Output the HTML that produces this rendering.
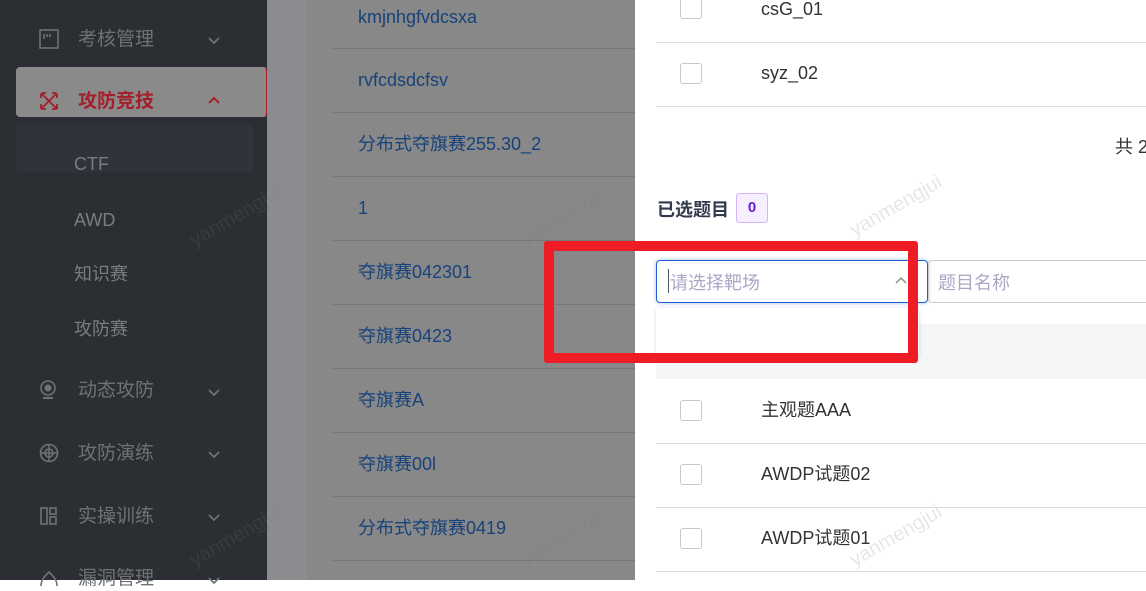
<!DOCTYPE html>
<html><head><meta charset="utf-8"><style>
*{margin:0;padding:0;box-sizing:border-box}
body{width:1146px;height:580px;overflow:hidden;position:relative;font-family:"Liberation Sans","Noto Sans CJK SC",sans-serif;background:#fff}
.abs{position:absolute}
#side{left:0;top:0;width:267px;height:580px;background:#2b2e33}
.mi{position:absolute;left:78px;font-size:19px;color:#6f7175;line-height:24px}
.ic{position:absolute;left:39px;width:20px;height:20px}
.chev{position:absolute;left:206px;width:16px;height:14px}
.sub{position:absolute;left:74px;font-size:18px;color:#7a7c80;line-height:24px}
#strip{left:267px;top:0;width:40px;height:580px;background:#8b8c90}
#mid{left:307px;top:0;width:328px;height:580px;background:#888}
.ml{position:absolute;left:26px;right:0;height:1px;background:#777}
.mt{position:absolute;left:51px;font-size:18px;color:#17427a;line-height:24px;white-space:nowrap}
#dr{left:635px;top:0;width:511px;height:580px;background:#fff}
.cb{position:absolute;left:45px;width:22px;height:21px;border:1px solid #c8c8c8;border-radius:3px;background:#fff}
.rt{position:absolute;left:126px;font-size:18px;color:#333;line-height:24px;white-space:nowrap}
.rl{position:absolute;left:21px;right:0;height:1px;background:#dcdcdc}
.wm{position:absolute;font-size:20px;color:rgba(120,120,120,.18);transform:rotate(-30deg);white-space:nowrap}
</style></head><body>
<div id="side" class="abs">
 <svg class="ic" style="top:29px" viewBox="0 0 20 20"><rect x="1" y="1" width="18" height="18" fill="none" stroke="#6f7175" stroke-width="1.6"/><path d="M5 5v5M8 5v3M11 5v3" stroke="#6f7175" stroke-width="1.6"/></svg>
 <div class="mi" style="top:28px">考核管理</div>
 <svg class="chev" style="top:33px" viewBox="0 0 16 14"><path d="M3 5l5 5 5-5" fill="none" stroke="#6f7175" stroke-width="1.8"/></svg>
 <div class="abs" style="left:16px;top:67px;width:252px;height:50px;background:#8a8a8a;border-radius:4px;border-right:2px solid #a3202a"></div>
 <svg class="ic" style="top:91px" viewBox="0 0 20 20"><path d="M2 2l16 16M18 2L2 18M3 2l4 0M2 3v4M13 18h5M18 13v5M17 2h-4M18 3v4M2 13v5M3 18h4" stroke="#a3202a" stroke-width="1.8" fill="none"/></svg>
 <div class="mi" style="top:90px;color:#a3202a;font-weight:bold">攻防竞技</div>
 <svg class="chev" style="top:94px" viewBox="0 0 16 14"><path d="M3 9l5-5 5 5" fill="none" stroke="#a3202a" stroke-width="2"/></svg>
 <div class="abs" style="left:16px;top:125px;width:237px;height:47px;background:#30333a;border-radius:3px"></div>
 <div class="sub" style="top:152px">CTF</div>
 <div class="sub" style="top:208px">AWD</div>
 <div class="sub" style="top:262px">知识赛</div>
 <div class="sub" style="top:317px">攻防赛</div>
 <svg class="ic" style="top:380px" viewBox="0 0 20 20"><circle cx="9" cy="8" r="7" fill="none" stroke="#6f7175" stroke-width="1.6"/><circle cx="9" cy="8" r="3.5" fill="#6f7175"/><path d="M4 18h10" stroke="#6f7175" stroke-width="2"/></svg>
 <div class="mi" style="top:379px">动态攻防</div>
 <svg class="chev" style="top:385px" viewBox="0 0 16 14"><path d="M3 5l5 5 5-5" fill="none" stroke="#6f7175" stroke-width="1.8"/></svg>
 <svg class="ic" style="top:443px" viewBox="0 0 20 20"><circle cx="10" cy="10" r="8.5" fill="none" stroke="#6f7175" stroke-width="1.6"/><circle cx="10" cy="10" r="4" fill="none" stroke="#6f7175" stroke-width="1.6"/><path d="M10 1v18M1 10h18" stroke="#6f7175" stroke-width="1.4"/></svg>
 <div class="mi" style="top:442px">攻防演练</div>
 <svg class="chev" style="top:447px" viewBox="0 0 16 14"><path d="M3 5l5 5 5-5" fill="none" stroke="#6f7175" stroke-width="1.8"/></svg>
 <svg class="ic" style="top:506px" viewBox="0 0 20 20"><rect x="2" y="2" width="6" height="16" fill="none" stroke="#6f7175" stroke-width="1.6"/><rect x="11" y="2" width="6" height="6" fill="none" stroke="#6f7175" stroke-width="1.6"/><rect x="11" y="11" width="6" height="7" fill="none" stroke="#6f7175" stroke-width="1.6"/></svg>
 <div class="mi" style="top:505px">实操训练</div>
 <svg class="chev" style="top:510px" viewBox="0 0 16 14"><path d="M3 5l5 5 5-5" fill="none" stroke="#6f7175" stroke-width="1.8"/></svg>
 <svg class="ic" style="top:568px" viewBox="0 0 20 20"><path d="M2 18c0-6 3-9 8-14 5 5 8 8 8 14" fill="none" stroke="#6f7175" stroke-width="1.6"/></svg>
 <div class="mi" style="top:567px">漏洞管理</div>
 <svg class="chev" style="top:573px" viewBox="0 0 16 14"><path d="M3 5l5 5 5-5" fill="none" stroke="#6f7175" stroke-width="1.8"/></svg>
</div>
<div id="strip" class="abs"></div>
<div id="mid" class="abs">
 <div class="mt" style="top:5px">kmjnhgfvdcsxa</div><div class="ml" style="top:48px"></div>
 <div class="mt" style="top:68px">rvfcdsdcfsv</div><div class="ml" style="top:112px"></div>
 <div class="mt" style="top:132px">分布式夺旗赛255.30_2</div><div class="ml" style="top:176px"></div>
 <div class="mt" style="top:196px">1</div><div class="ml" style="top:240px"></div>
 <div class="mt" style="top:260px">夺旗赛042301</div><div class="ml" style="top:304px"></div>
 <div class="mt" style="top:324px">夺旗赛0423</div><div class="ml" style="top:368px"></div>
 <div class="mt" style="top:388px">夺旗赛A</div><div class="ml" style="top:432px"></div>
 <div class="mt" style="top:452px">夺旗赛00l</div><div class="ml" style="top:496px"></div>
 <div class="mt" style="top:516px">分布式夺旗赛0419</div><div class="ml" style="top:560px"></div>
</div>
<div id="dr" class="abs">
 <div class="cb" style="top:-2px"></div><div class="rt" style="top:-3px">csG_01</div><div class="rl" style="top:42px"></div>
 <div class="cb" style="top:63px"></div><div class="rt" style="top:61px">syz_02</div><div class="rl" style="top:106px"></div>
 <div class="abs" style="left:480px;top:133px;font-size:18px;color:#333;white-space:nowrap">共 2</div>
 <div class="abs" style="left:22px;top:196px;font-size:18px;font-weight:bold;color:#333a4d">已选题目</div>
 <div class="abs" style="left:101px;top:193px;width:32px;height:30px;border:1px solid #d6b3f5;background:#f6efff;border-radius:3px;color:#6a1bd6;font-weight:bold;font-size:15px;text-align:center;line-height:28px">0</div>
 <div class="abs" style="left:21px;top:260px;width:272px;height:43px;border:1px solid #1a5fd1;border-radius:4px;box-shadow:0 0 4px rgba(26,95,209,.4)"></div>
 <div class="abs" style="left:33px;top:269px;width:1px;height:24px;background:#555"></div>
 <div class="abs" style="left:35px;top:269px;font-size:18px;color:#a9a8c6">请选择靶场</div>
 <svg class="abs" style="left:260px;top:276px" width="12" height="10" viewBox="0 0 12 10"><path d="M1 7l5-5 5 5" fill="none" stroke="#999" stroke-width="1.6"/></svg>
 <div class="abs" style="left:293px;top:260px;width:230px;height:43px;border:1px solid #ccc;border-radius:4px"></div>
 <div class="abs" style="left:303px;top:269px;font-size:18px;color:#a9a8c6">题目名称</div>
 <div class="abs" style="left:21px;top:324px;width:500px;height:55px;background:#f4f5f7"></div>
 <div class="abs" style="left:21px;top:308px;width:263px;height:48px;background:#fff;border-radius:3px;box-shadow:0 1px 4px rgba(0,0,0,.15)"></div>
 <div class="cb" style="top:400px"></div><div class="rt" style="top:398px">主观题AAA</div><div class="rl" style="top:443px"></div>
 <div class="cb" style="top:464px"></div><div class="rt" style="top:462px">AWDP试题02</div><div class="rl" style="top:507px"></div>
 <div class="cb" style="top:528px"></div><div class="rt" style="top:526px">AWDP试题01</div><div class="rl" style="top:571px"></div>
</div>
<div class="abs" style="left:544px;top:241px;width:374px;height:122px;border:10px solid #ee1c25;border-radius:3px"></div>
<div class="wm" style="left:185px;top:205px">yanmengjui</div>
<div class="wm" style="left:515px;top:205px">yanmengjui</div>
<div class="wm" style="left:845px;top:195px">yanmengjui</div>
<div class="wm" style="left:185px;top:525px">yanmengjui</div>
<div class="wm" style="left:515px;top:525px">yanmengjui</div>
<div class="wm" style="left:845px;top:525px">yanmengjui</div>
</body></html>
